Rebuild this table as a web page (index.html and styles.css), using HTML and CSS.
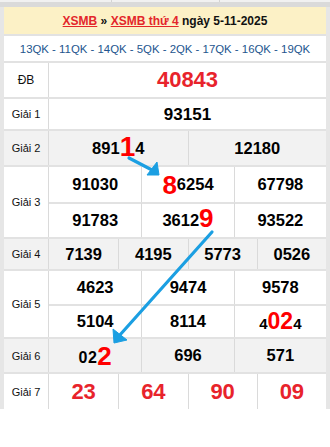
FILE: index.html
```html
<!DOCTYPE html>
<html lang="vi">
<head>
<meta charset="utf-8">
<title>XSMB thứ 4 ngày 5-11-2025</title>
<link rel="stylesheet" href="styles.css">
</head>
<body>
<div class="page">
  <div class="prev">
    <div class="pc"></div><div class="pc"></div><div class="pc"></div>
  </div>
  <div class="sep"></div>
  <div class="wrap">
    <div class="board">
      <div class="title"><a href="#">XSMB</a> » <a href="#">XSMB thứ 4</a> ngày 5-11-2025</div>
      <div class="codes">13QK - 11QK - 14QK - 5QK - 2QK - 17QK - 16QK - 19QK</div>

      <div class="row r-db">
        <div class="lbl db">ĐB</div>
        <div class="cells c1"><div class="cell num-db">40843</div></div>
      </div>

      <div class="row r-g1">
        <div class="lbl">Giải 1</div>
        <div class="cells c1"><div class="cell num g1">93151</div></div>
      </div>

      <div class="row r-g2 alt">
        <div class="lbl">Giải 2</div>
        <div class="cells c2">
          <div class="cell num">891<span class="hi big28">1</span>4</div>
          <div class="cell num">12180</div>
        </div>
      </div>

      <div class="row r-g3">
        <div class="lbl">Giải 3</div>
        <div class="cells c3 two">
          <div class="cell num">91030</div>
          <div class="cell num"><span class="hi big26">8</span>6254</div>
          <div class="cell num">67798</div>
          <div class="cell num">91783</div>
          <div class="cell num">3612<span class="hi big26 lift">9</span></div>
          <div class="cell num">93522</div>
        </div>
      </div>

      <div class="row r-g4 alt">
        <div class="lbl">Giải 4</div>
        <div class="cells c4">
          <div class="cell num">7139</div>
          <div class="cell num">4195</div>
          <div class="cell num">5773</div>
          <div class="cell num">0526</div>
        </div>
      </div>

      <div class="row r-g5">
        <div class="lbl">Giải 5</div>
        <div class="cells c3 two">
          <div class="cell num">4623</div>
          <div class="cell num">9474</div>
          <div class="cell num">9578</div>
          <div class="cell num">5104</div>
          <div class="cell num">8114</div>
          <div class="cell num"><span class="sm">4</span><span class="hi big22">02</span><span class="sm">4</span></div>
        </div>
      </div>

      <div class="row r-g6 alt">
        <div class="lbl">Giải 6</div>
        <div class="cells c3">
          <div class="cell num"><span class="wide">02</span><span class="hi big26">2</span></div>
          <div class="cell num">696</div>
          <div class="cell num">571</div>
        </div>
      </div>

      <div class="row r-g7">
        <div class="lbl">Giải 7</div>
        <div class="cells c4">
          <div class="cell num-red">23</div>
          <div class="cell num-red">64</div>
          <div class="cell num-red">90</div>
          <div class="cell num-red">09</div>
        </div>
      </div>
    </div>
  </div>

  <svg class="arrows" width="330" height="447" viewBox="0 0 330 447" aria-hidden="true">
    <path d="M129 158 L152 170" class="shaft"/>
    <polygon points="159,175 147,175 157,162" class="head"/>
    <path d="M212 232 L119 336" class="shaft"/>
    <polygon points="114,343 113,329 127,340" class="head"/>
  </svg>
</div>
</body>
</html>
```

FILE: styles.css
```css
* { box-sizing: border-box; }

html, body {
  margin: 0;
  padding: 0;
  background: #ffffff;
}

body {
  font-family: "Liberation Sans", Arial, sans-serif;
  color: #111;
}

.page {
  position: relative;
  width: 330px;
  height: 447px;
  overflow: hidden;
}

.prev {
  display: grid;
  grid-template-columns: 111px 108px 1fr;
  height: 2px;
  background: #f1f1f1;
}

.pc + .pc {
  border-left: 1px solid #d4d4d4;
}

.sep {
  height: 5px;
  background: #dadada;
}

.wrap {
  background: #e6e6e6;
  padding: 0 4px;
}

.board {
  background: #fff;
}

.title {
  height: 27px;
  background: #fcf1c6;
  display: flex;
  align-items: center;
  justify-content: center;
  font-size: 12px;
  font-weight: bold;
  color: #111;
  white-space: pre;
}

.title a {
  color: #e3262b;
  text-decoration: underline;
}

.codes {
  height: 27px;
  border-top: 2px solid #e2e2e2;
  display: flex;
  align-items: center;
  justify-content: center;
  font-size: 11.4px;
  color: #23558e;
  white-space: nowrap;
}

.row {
  display: grid;
  grid-template-columns: 45px 1fr;
  border-top: 2px solid #e2e2e2;
  background: #fff;
}

.row.alt {
  background: #f2f2f2;
}

.r-db { height: 36px; }
.r-g1 { height: 32px; }
.r-g2 { height: 36px; }
.r-g3 { height: 72px; }
.r-g4 { height: 32px; }
.r-g5 { height: 68px; }
.r-g6 { height: 35px; }
.r-g7 { height: 37px; }

.lbl {
  display: flex;
  align-items: center;
  justify-content: center;
  font-size: 11px;
  color: #111;
  border-right: 1px solid #dadada;
}

.lbl.db {
  font-size: 12px;
}

.cells {
  display: grid;
  grid-auto-rows: 1fr;
}

.c1 { grid-template-columns: 1fr; }
.c2 { grid-template-columns: repeat(2, 1fr); }
.c3 { grid-template-columns: repeat(3, 1fr); }
.c4 { grid-template-columns: repeat(4, 1fr); }

.cell {
  display: flex;
  align-items: center;
  justify-content: center;
  white-space: nowrap;
  line-height: 1;
}

.c2 .cell:nth-child(2n+2),
.c3 .cell:not(:nth-child(3n+1)),
.c4 .cell:not(:nth-child(4n+1)) {
  border-left: 1px solid #dadada;
}

.two .cell:nth-child(n+4) {
  border-top: 2px solid #e2e2e2;
}

.num {
  font-size: 16.5px;
  font-weight: bold;
  color: #000;
}

.num.g1 {
  font-size: 17px;
}

.num-db {
  font-size: 22px;
  font-weight: bold;
  color: #e8232b;
}

.num-red {
  font-size: 22px;
  font-weight: bold;
  color: #e8232b;
}

.hi {
  color: #ff0000;
  font-weight: bold;
}

.big28 { font-size: 28px; position: relative; top: -1px; }
.big26 { font-size: 26px; }
.big22 { font-size: 23px; }
.lift { position: relative; top: -3px; }

.sm {
  font-size: 15px;
  position: relative;
  top: 2px;
}

.wide {
  font-size: 16px;
  letter-spacing: 0.5px;
  position: relative;
  top: 2px;
}

.arrows {
  position: absolute;
  left: 0;
  top: 0;
  pointer-events: none;
}

.shaft {
  stroke: #1b9fe2;
  stroke-width: 3.2;
  stroke-linecap: round;
  fill: none;
}

.head {
  fill: #1b9fe2;
  stroke: #1b9fe2;
  stroke-width: 1;
  stroke-linejoin: round;
}
```
